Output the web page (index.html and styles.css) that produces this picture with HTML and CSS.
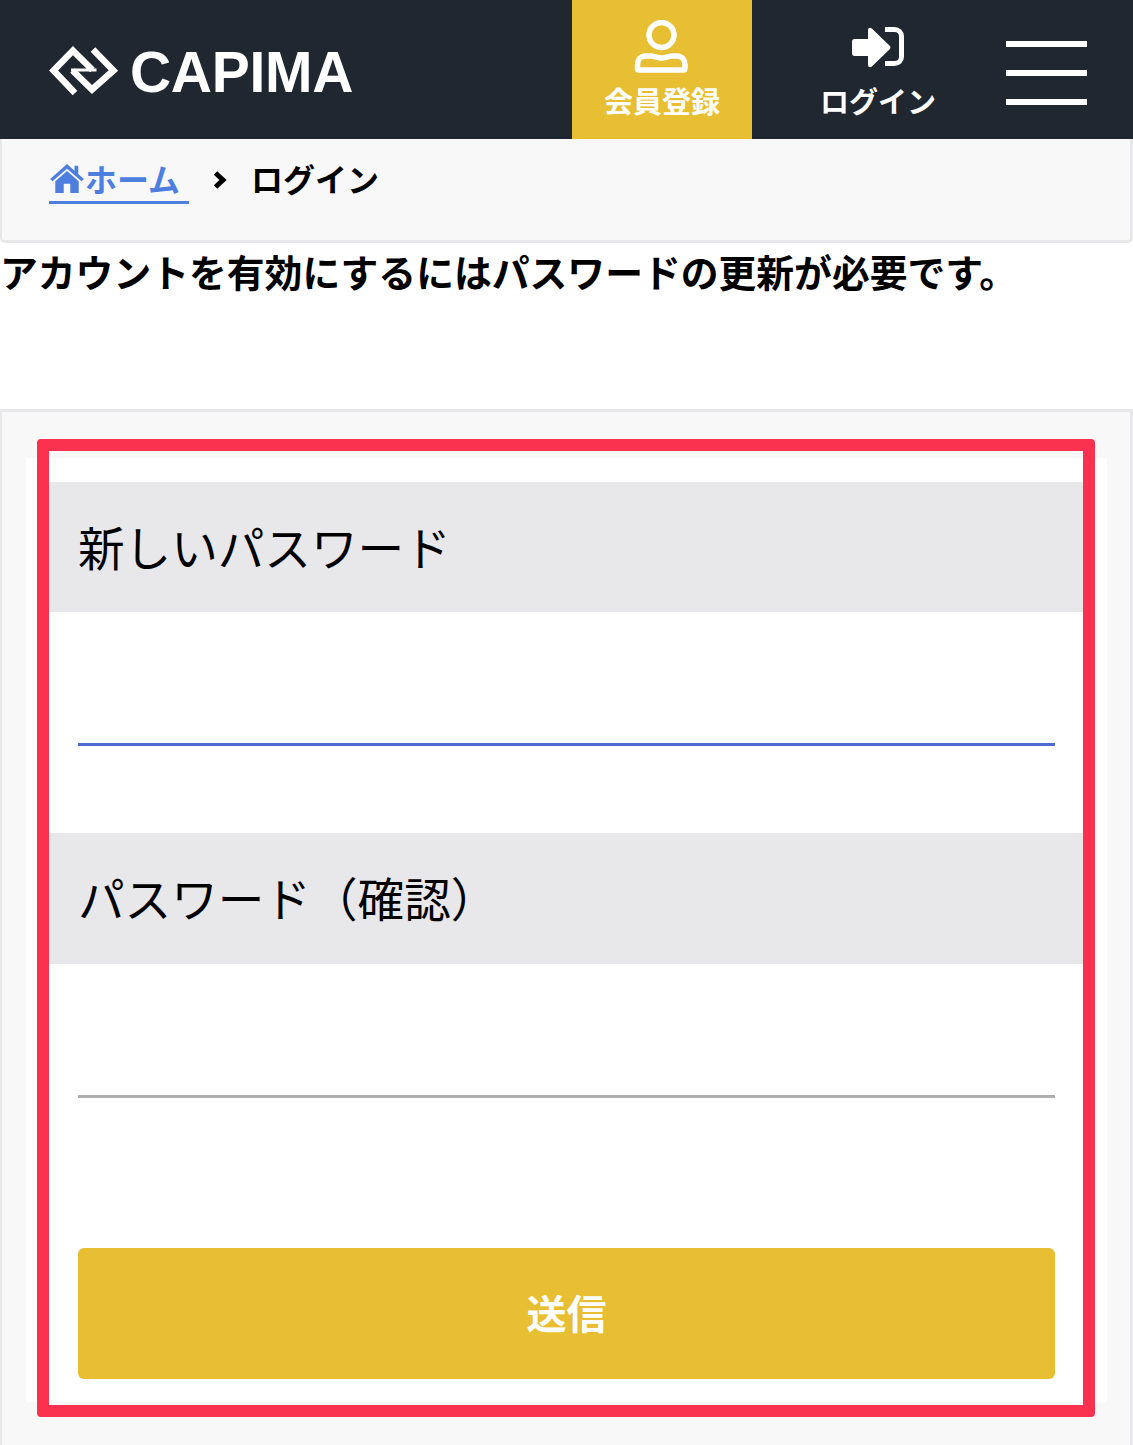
FILE: index.html
```html
<!DOCTYPE html>
<html lang="ja">
<head>
<meta charset="utf-8">
<title>CAPIMA ログイン</title>
<link rel="stylesheet" href="styles.css">
</head>
<body>
<header class="site-header">
  <a class="logo">
    <svg class="logo-mark" viewBox="0 0 70 50" aria-hidden="true">
      <polyline points="26,47 4.600,24.500 24,4.600 43.500,24"></polyline>
      <polyline points="23.500,24.500 43,43.500 64.400,24.500 44,3.600"></polyline>
      <line class="logo-bar" x1="22" y1="24" x2="47.500" y2="24"></line>
    </svg>
    <span class="logo-text">CAPIMA</span>
  </a>
  <a class="nav-item nav-register">
    <svg class="nav-icon" viewBox="0 0 56 56" aria-hidden="true">
      <circle cx="27.500" cy="15" r="12.500"></circle>
      <path d="M12 36h5c3.500 0 6 2 10.500 2s7-2 10.500-2h5c5 0 8 4 8 9v3.500c0 1-.5 1.500-1.500 1.500h-44.500c-1 0-1.500-.5-1.500-1.500v-3.500c0-5 3-9 8-9z"></path>
    </svg>
    <span class="nav-label">会員登録</span>
  </a>
  <a class="nav-item nav-login">
    <svg class="nav-icon" viewBox="0 0 56 56" aria-hidden="true">
      <path class="solid" d="M3.500 20H17V11c0-2.200 2.400-3 3.800-1.500L38.700 26.700c1 1 1 2.600 0 3.600L20.800 47.500C19.400 49 17 48.200 17 46V37H3.500C2 37 1 36 1 34.500V22.500C1 21 2 20 3.500 20z"></path>
      <path class="line" d="M34 10.500h9.500c4 0 7 3 7 7v20c0 4-3 7-7 7H34"></path>
    </svg>
    <span class="nav-label">ログイン</span>
  </a>
  <button class="menu-button" aria-label="メニュー">
    <span></span><span></span><span></span>
  </button>
</header>

<nav class="breadcrumb">
  <a class="crumb-link">
    <svg class="home-icon" viewBox="0 0 36 32" aria-hidden="true">
      <path d="M18 1 0 17l2.500 2.500L18 6l15.500 13.500L36 17l-6-5.300V3h-4v5.200z"></path>
      <path d="M18 8.500 5.500 19.500V32h9V22h7v10h9V19.500z"></path>
    </svg>ホーム
  </a>
  <svg class="chevron" viewBox="0 0 14 20" aria-hidden="true"><polyline points="2.500,3 10,10 2.500,17"></polyline></svg>
  <span class="crumb-current">ログイン</span>
</nav>

<p class="notice">アカウントを有効にするにはパスワードの更新が必要です。</p>

<main class="panel">
  <form class="card">
    <div class="field-head">新しいパスワード</div>
    <div class="field-body"><div class="field-line field-line-active"></div></div>
    <div class="field-head field-head-tall">パスワード（確認）</div>
    <div class="field-body"><div class="field-line"></div></div>
    <div class="submit-row"><button class="submit" type="button">送信</button></div>
  </form>
  <div class="highlight"></div>
</main>
</body>
</html>
```
FILE: styles.css
```css
* { box-sizing: border-box; }
html, body { margin: 0; padding: 0; }
body {
  background: #fff;
  color: #000;
  font-family: "Liberation Sans", "Noto Sans CJK JP", sans-serif;
}

.site-header {
  display: flex;
  align-items: stretch;
  height: 139px;
  background: #212730;
  color: #fff;
}
.logo {
  display: flex;
  align-items: center;
  width: 572px;
  padding-left: 49px;
  gap: 11px;
}
.logo-mark {
  width: 70px;
  height: 50px;
  margin-top: 2px;
  flex: none;
}
.logo-mark polyline {
  fill: none;
  stroke: #fff;
  stroke-width: 6.500;
  stroke-linejoin: miter;
}
.logo-mark .logo-bar {
  stroke: #fff;
  stroke-width: 3;
}
.logo-text {
  font-size: 57px;
  font-weight: 700;
  letter-spacing: -0.3px;
  line-height: 1;
  margin-top: 6px;
}
.nav-item {
  display: flex;
  flex-direction: column;
  align-items: center;
  padding-top: 19px;
}
.nav-register { width: 180px; background: #e8bf32; }
.nav-register .nav-icon { margin-top: 1px; margin-bottom: -1px; }
.nav-login { width: 252px; }
.nav-icon { width: 56px; height: 56px; display: block; }
.nav-register .nav-icon circle,
.nav-register .nav-icon path {
  fill: none;
  stroke: #fff;
  stroke-width: 5.500;
}
.nav-login .nav-icon { margin-left: 2px; }
.nav-login .solid { fill: #fff; }
.nav-login .line { fill: none; stroke: #fff; stroke-width: 5; }
.nav-label {
  font-family: "Noto Sans CJK JP", sans-serif;
  font-size: 29px;
  font-weight: 700;
  line-height: 42px;
  margin-top: 4px;
  white-space: nowrap;
}
.menu-button {
  display: flex;
  flex-direction: column;
  justify-content: space-between;
  width: 81px;
  height: 64px;
  margin: 41px 0 0 2px;
  padding: 0;
  border: 0;
  background: none;
}
.menu-button span {
  display: block;
  height: 6px;
  background: #fff;
}

.breadcrumb {
  display: flex;
  align-items: flex-start;
  height: 104px;
  padding: 16px 0 0 47px;
  background: #f8f8f9;
  border: solid #e8e8ea;
  border-width: 0 3px 3px 2px;
  border-radius: 0 0 5px 5px;
  font-family: "Noto Sans CJK JP", sans-serif;
  font-size: 32px;
  font-weight: 700;
  line-height: 46px;
}
.crumb-link {
  display: flex;
  align-items: center;
  width: 140px;
  height: 46px;
  color: #4e7fdf;
  border-bottom: 3px solid #4e7fdf;
  box-sizing: content-box;
}
.home-icon {
  width: 36px;
  height: 30px;
  fill: #4e7fdf;
  flex: none;
}
.chevron {
  width: 14px;
  height: 20px;
  margin: 15px 24px 0 24px;
  fill: none;
  stroke: #000;
  stroke-width: 5;
  flex: none;
}

.notice {
  margin: 0;
  height: 166px;
  padding: 3px 0 0 0;
  font-family: "Noto Sans CJK JP", sans-serif;
  font-size: 37.800px;
  font-weight: 700;
  line-height: 50px;
  white-space: nowrap;
}

.panel {
  position: relative;
  padding: 46px 23px 43px 24px;
  background: #f8f8f9;
  border: solid #e8e8ea;
  border-width: 3px 3px 0 2px;
}
.card {
  display: flex;
  flex-direction: column;
  padding: 24px 23px 23px 23px;
  background: #fff;
}
.field-head {
  height: 130px;
  padding-left: 29px;
  background: #e8e8ea;
  font-family: "Noto Sans CJK JP", sans-serif;
  font-size: 46.600px;
  line-height: 127px;
  white-space: nowrap;
}
.field-head-tall { height: 131px; }
.field-body {
  height: 221px;
  padding: 131px 29px 0;
}
.field-line {
  height: 3px;
  background: #aeaeb0;
}
.field-line-active { background: #4f6bd2; }
.submit-row {
  padding: 63px 29px 0;
}
.submit {
  display: block;
  width: 100%;
  height: 131px;
  padding: 0 0 4px;
  border: 0;
  border-radius: 6px;
  background: #e8bf32;
  color: #fff;
  font-family: "Noto Sans CJK JP", sans-serif;
  font-size: 40px;
  font-weight: 700;
}
.highlight {
  position: absolute;
  left: 35px;
  top: 27px;
  width: 1058px;
  height: 978px;
  border: 12px solid #fb3150;
  border-radius: 4px;
}
```
